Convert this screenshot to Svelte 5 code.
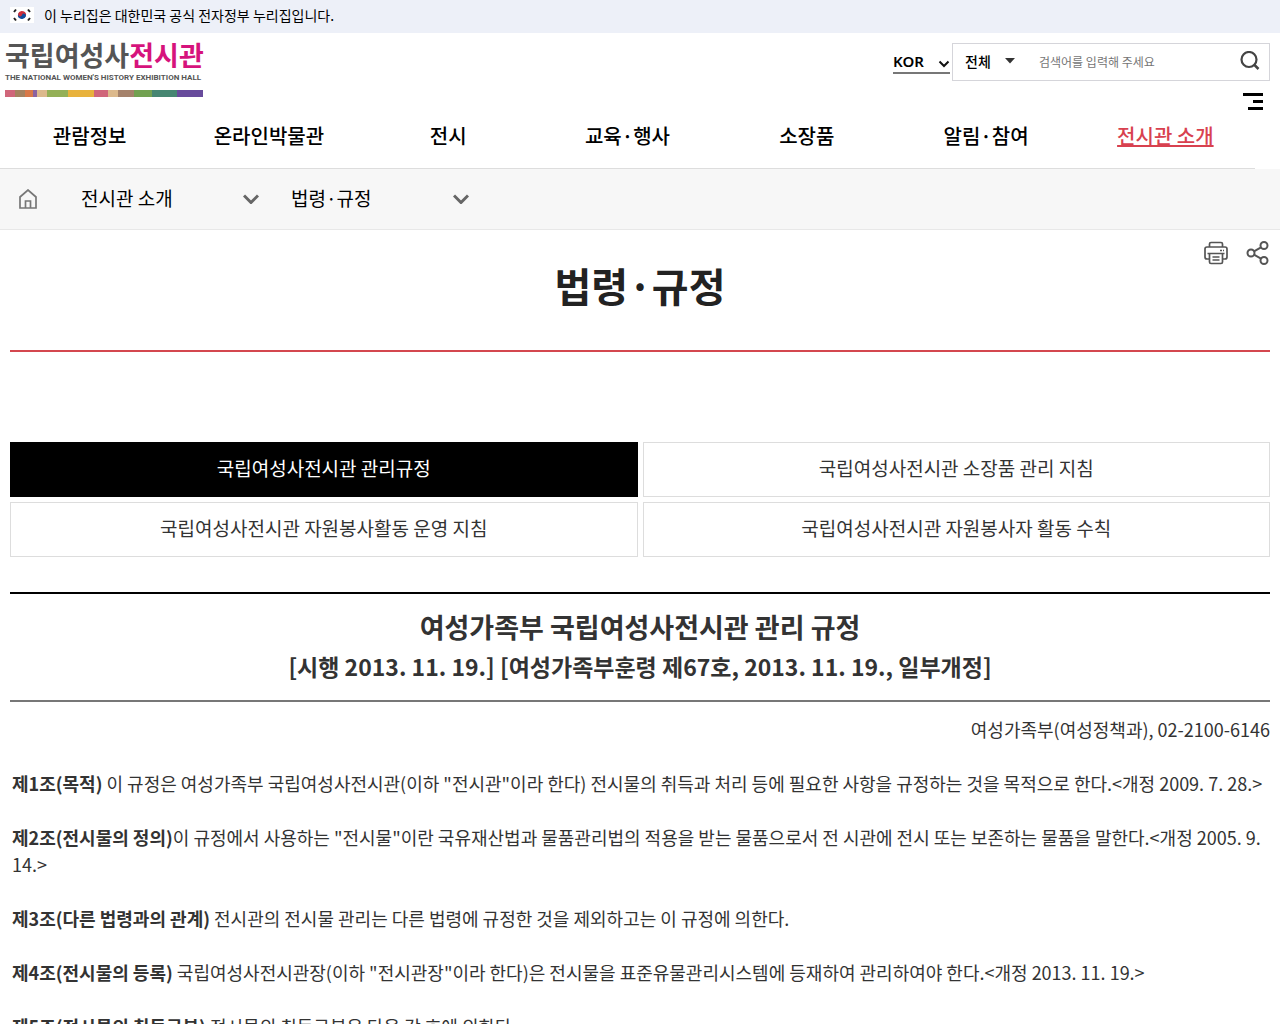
<script lang="ts">
    let language = $state('KOR');
    let searchScope = $state('전체');
    let keyword = $state('');
    let activeTab = $state(0);

    const menus = ['관람정보', '온라인박물관', '전시', '교육·행사', '소장품', '알림·참여', '전시관 소개'];
    const currentMenu = '전시관 소개';

    const tabs = [
        '국립여성사전시관 관리규정',
        '국립여성사전시관 소장품 관리 지침',
        '국립여성사전시관 자원봉사활동 운영 지침',
        '국립여성사전시관 자원봉사자 활동 수칙'
    ];

    const articles = [
        {
            title: '제1조(목적)',
            text: ' 이 규정은 여성가족부 국립여성사전시관(이하 "전시관"이라 한다) 전시물의 취득과 처리 등에 필요한 사항을 규정하는 것을 목적으로 한다.<개정 2009. 7. 28.>'
        },
        {
            title: '제2조(전시물의 정의)',
            text: '이 규정에서 사용하는 "전시물"이란 국유재산법과 물품관리법의 적용을 받는 물품으로서 전 시관에 전시 또는 보존하는 물품을 말한다.<개정 2005. 9. 14.>'
        },
        {
            title: '제3조(다른 법령과의 관계)',
            text: ' 전시관의 전시물 관리는 다른 법령에 규정한 것을 제외하고는 이 규정에 의한다.'
        },
        {
            title: '제4조(전시물의 등록)',
            text: ' 국립여성사전시관장(이하 "전시관장"이라 한다)은 전시물을 표준유물관리시스템에 등재하여 관리하여야 한다.<개정 2013. 11. 19.>'
        },
        {
            title: '제5조(전시물의 취득구분)',
            text: ' 전시물의 취득구분은 다음 각 호에 의한다.'
        }
    ];
</script>

<div class="gov-bar">
    <svg class="flag" viewBox="0 0 24 16" aria-hidden="true">
        <rect width="24" height="16" fill="#fff" />
        <g transform="rotate(20 12 8)">
            <path d="M8 8a4 4 0 0 1 8 0z" fill="#cd2e3a" />
            <path d="M8 8a4 4 0 0 0 8 0z" fill="#0f4c9c" />
            <circle cx="10" cy="8" r="2" fill="#cd2e3a" />
            <circle cx="14" cy="8" r="2" fill="#0f4c9c" />
        </g>
        <path d="M4 5l2-2.500M18 2.500l2 2.500M4 11l2 2.500M18 13.500l2-2.500" stroke="#222" stroke-width="2" />
    </svg>
    <span>이 누리집은 대한민국 공식 전자정부 누리집입니다.</span>
</div>

<header>
    <div class="header-top">
        <a class="logo" href="#home">
            <span class="logo-name">국립여성사<em>전시관</em></span>
            <span class="logo-sub">THE NATIONAL WOMEN'S HISTORY EXHIBITION HALL</span>
            <span class="logo-stripe"></span>
        </a>

        <div class="tools">
            <div class="tool-row">
                <div class="language">
                    <select aria-label="언어 선택" bind:value={language}>
                        <option>KOR</option>
                        <option>ENG</option>
                    </select>
                    <svg viewBox="0 0 12 8" aria-hidden="true">
                        <path d="M1.500 1.500L6 6l4.500-4.500" fill="none" stroke="#111" stroke-width="2" />
                    </svg>
                </div>
                <form class="search" onsubmit={(e) => e.preventDefault()}>
                    <div class="scope">
                        <select aria-label="검색 범위" bind:value={searchScope}>
                            <option>전체</option>
                            <option>소장품</option>
                        </select>
                        <svg viewBox="0 0 10 6" aria-hidden="true">
                            <path d="M0 0h10L5 5.500z" fill="#333" />
                        </svg>
                    </div>
                    <input type="text" aria-label="검색어" placeholder="검색어를 입력해 주세요" bind:value={keyword} />
                    <button type="submit" aria-label="검색">
                        <svg viewBox="0 0 20 20" aria-hidden="true">
                            <circle cx="9" cy="8.500" r="7.500" fill="none" stroke="#444" stroke-width="2.200" />
                            <path d="M14 13.500l4.500 4.500" stroke="#444" stroke-width="2.500" />
                        </svg>
                    </button>
                </form>
            </div>
            <button class="sitemap" aria-label="전체 메뉴">
                <svg viewBox="0 0 20 17" aria-hidden="true">
                    <path d="M0 1.500h20M10 8.500h10M5 15.500h15" stroke="#000" stroke-width="3" />
                </svg>
            </button>
        </div>
    </div>

    <nav aria-label="주 메뉴">
        {#each menus as menu}
            <a href="#menu" class:current={menu === currentMenu}>{menu}</a>
        {/each}
    </nav>
</header>

<div class="breadcrumb">
    <a class="home" href="#home" aria-label="홈">
        <svg viewBox="0 0 18 20" aria-hidden="true">
            <path d="M1 19V8l8-7 8 7v11zM6.500 19v-7h5v7" fill="none" stroke="#777" stroke-width="1.700" />
        </svg>
    </a>
    {#each ['전시관 소개', '법령·규정'] as crumb}
        <button>
            <span>{crumb}</span>
            <svg viewBox="0 0 16 10" aria-hidden="true">
                <path d="M1 1.500l7 7 7-7" fill="none" stroke="#666" stroke-width="3" />
            </svg>
        </button>
    {/each}
</div>

<main>
    <div class="page-tools">
        <button aria-label="인쇄">
            <svg viewBox="0 0 24 24" fill="none" stroke="#555" stroke-width="1.700" aria-hidden="true">
                <path d="M5.500 6V3a1.500 1.500 0 0 1 1.500-1.500h10A1.500 1.500 0 0 1 18.500 3v3" />
                <path d="M5.500 18H3a2 2 0 0 1-2-2V8a2 2 0 0 1 2-2h18a2 2 0 0 1 2 2v8a2 2 0 0 1-2 2h-2.500" />
                <path d="M3.500 12.500h17M5.500 12.500V21A1.500 1.500 0 0 0 7 22.500h10a1.500 1.500 0 0 0 1.500-1.500v-8.500M8.500 16h7M8.500 19h7M16 9.500h2M19 9.500h1" />
            </svg>
        </button>
        <button aria-label="공유">
            <svg viewBox="0 0 24 24" fill="none" stroke="#555" stroke-width="2" aria-hidden="true">
                <circle cx="5" cy="12" r="3.500" />
                <circle cx="18" cy="4.500" r="3.500" />
                <circle cx="18" cy="19.500" r="3.500" />
                <path d="M8 10.300l7-4M8 13.700l7 4" />
            </svg>
        </button>
    </div>

    <h1>법령·규정</h1>

    <div class="tabs">
        {#each tabs as tab, i}
            <button class:active={activeTab === i} onclick={() => activeTab = i}>{tab}</button>
        {/each}
    </div>

    <div class="rule-title">
        <h2>여성가족부 국립여성사전시관 관리 규정</h2>
        <p>[시행 2013. 11. 19.] [여성가족부훈령 제67호, 2013. 11. 19., 일부개정]</p>
    </div>

    <p class="contact">여성가족부(여성정책과), 02-2100-6146</p>

    <div class="articles">
        {#each articles as article}
            <p><strong>{article.title}</strong>{article.text}</p>
        {/each}
    </div>
</main>

<style>
    :global(body) {
        background: #fff;
        color: #333;
        font-family: "Noto Sans CJK KR", sans-serif;
        font-size: 18px;
    }

    button, input, select {
        padding: 0;
        border: 0;
        background: none;
        color: inherit;
        font: inherit;
    }

    button {
        cursor: pointer;
    }

    a {
        color: inherit;
        text-decoration: none;
    }

    svg {
        display: block;
        flex: none;
    }

    .gov-bar {
        display: flex;
        align-items: center;
        gap: 10px;
        height: 29px;
        padding: 0 10px 4px;
        background: #edf0f8;
        color: #000;
        font-size: 14px;
    }

    .flag {
        width: 24px;
        height: 16px;
    }

    .header-top {
        display: flex;
        justify-content: space-between;
        height: 77px;
    }

    .logo {
        display: flex;
        flex-direction: column;
        width: 198px;
        padding: 6px 5px 0;
        color: #555;
        white-space: nowrap;
    }

    .logo-name {
        font-size: 27px;
        font-weight: 700;
        line-height: 32px;
    }

    .logo-name em {
        color: #d6137c;
        font-style: normal;
    }

    .logo-sub {
        font-family: Roboto, sans-serif;
        font-size: 8px;
        font-weight: 700;
        line-height: 14px;
    }

    .logo-stripe {
        height: 7px;
        margin-top: 5px;
        background: linear-gradient(90deg,
            #d0667a 0 5%, #a5825f 5% 10%, #d87848 10% 14%, #8b62a0 14% 16%,
            #dcb98c 16% 21%, #94b057 21% 32%, #e8b23c 32% 45%, #d0667a 45% 52%,
            #dcb98c 52% 57%, #a5826b 57% 65%, #72a151 65% 74%, #468672 74% 87%,
            #684b9c 87%);
    }

    .tools {
        display: flex;
        flex-direction: column;
        align-items: flex-end;
        gap: 12px;
        padding: 10px 10px 0 0;
    }

    .tool-row {
        display: flex;
        gap: 2px;
    }

    .language {
        display: flex;
        align-items: center;
        width: 57px;
        height: 29px;
        border-bottom: 2px solid #777;
        color: #000;
    }

    .language select {
        flex: 1;
        min-width: 0;
        height: 29px;
        padding-top: 7px;
        appearance: none;
        font-family: "Noto Sans", sans-serif;
        font-size: 15px;
        font-weight: 600;
    }

    .language svg {
        width: 12px;
        height: 8px;
        margin-top: 12px;
    }

    .search {
        display: flex;
        align-items: center;
        box-sizing: border-box;
        width: 318px;
        height: 38px;
        padding: 0 9px 2px 12px;
        border: 1px solid #d5d5da;
    }

    .scope {
        display: flex;
        align-items: center;
        width: 50px;
        color: #000;
    }

    .scope select {
        flex: 1;
        min-width: 0;
        appearance: none;
        font-size: 14px;
        font-weight: 500;
    }

    .scope svg {
        width: 10px;
        height: 6px;
    }

    .search input {
        flex: 1;
        min-width: 0;
        padding-left: 24px;
        font-size: 12px;
    }

    .search input::placeholder {
        color: #757575;
    }

    .search button svg {
        width: 20px;
        height: 20px;
    }

    .sitemap {
        margin-right: 7px;
    }

    .sitemap svg {
        width: 20px;
        height: 17px;
    }

    nav {
        display: grid;
        grid-template-columns: repeat(7, 1fr);
        margin-right: 25px;
        padding-bottom: 6px;
        border-bottom: 1px solid #ddd;
    }

    nav a {
        color: #000;
        font-size: 20px;
        font-weight: 500;
        line-height: 52px;
        text-align: center;
    }

    nav a.current {
        color: #d8414f;
        text-decoration: underline;
    }

    .breadcrumb {
        display: flex;
        align-items: center;
        height: 60px;
        padding-left: 19px;
        border-bottom: 1px solid #e8e8e8;
        background: #f7f7f7;
    }

    .home {
        margin-right: 12px;
    }

    .home svg {
        width: 18px;
        height: 20px;
    }

    .breadcrumb button {
        display: flex;
        align-items: center;
        justify-content: space-between;
        width: 210px;
        padding: 0 0 0 32px;
        color: #000;
        font-size: 19px;
    }

    .breadcrumb button span {
        padding-bottom: 4px;
    }

    .breadcrumb button svg {
        width: 16px;
        height: 10px;
    }

    main {
        padding: 0 10px;
    }

    .page-tools {
        display: flex;
        justify-content: flex-end;
        gap: 18px;
        padding-top: 11px;
    }

    .page-tools svg {
        width: 24px;
        height: 24px;
    }

    h1 {
        margin: 0;
        padding-bottom: 45px;
        border-bottom: 2px solid #d4474f;
        color: #222;
        font-size: 40px;
        font-weight: 700;
        line-height: 40px;
        text-align: center;
    }

    .tabs {
        display: grid;
        grid-template-columns: 1fr 1fr;
        gap: 5px;
        margin-top: 90px;
    }

    .tabs button {
        height: 55px;
        padding-bottom: 4px;
        border: 1px solid #ddd;
        font-size: 19px;
    }

    .tabs button.active {
        border-color: #000;
        background: #000;
        color: #fff;
    }

    .rule-title {
        margin-top: 35px;
        padding: 14px 0;
        border-top: 2px solid #000;
        border-bottom: 2px solid #777;
        font-weight: 700;
        text-align: center;
    }

    .rule-title h2 {
        margin: 0;
        font-size: 27px;
        line-height: 38px;
    }

    .rule-title p {
        margin: 0;
        font-size: 23px;
        line-height: 40px;
    }

    .contact {
        margin: 14px 0 27px;
        line-height: 27px;
        text-align: right;
    }

    .articles p {
        margin: 0 0 27px;
        padding: 0 2px;
        line-height: 27px;
    }
</style>
